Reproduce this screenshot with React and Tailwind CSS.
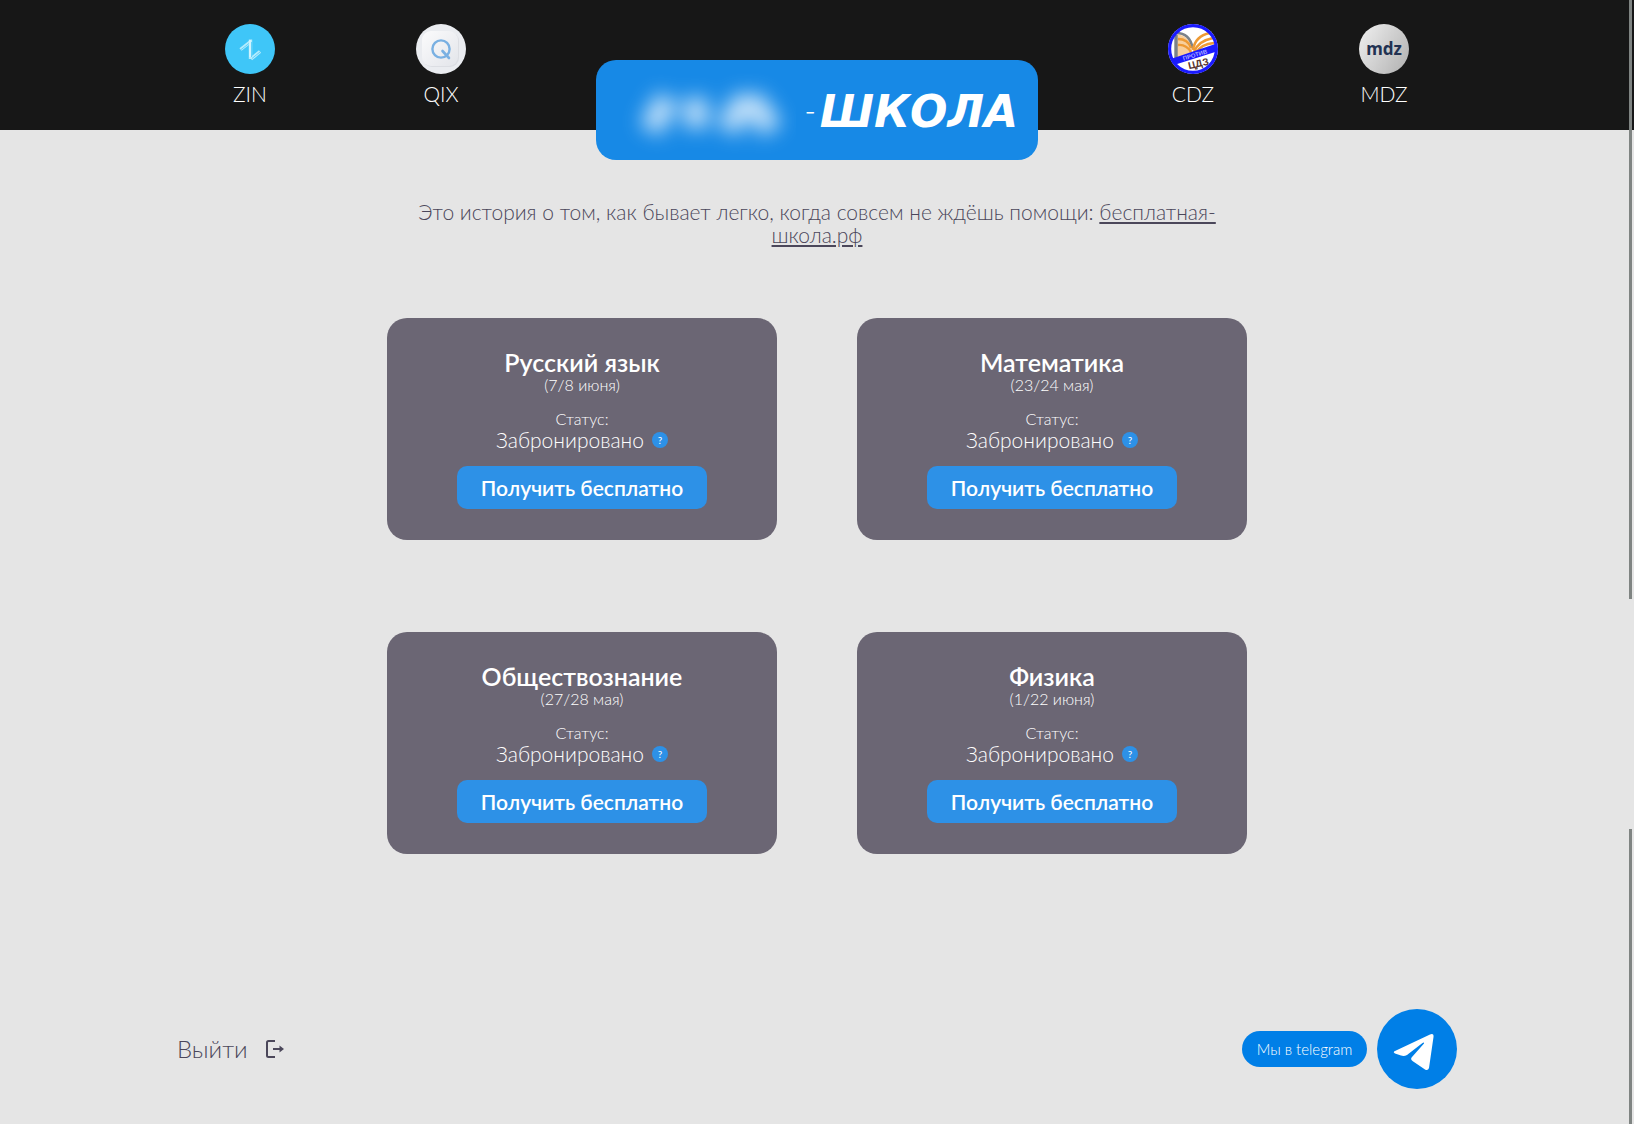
import React from 'react';

const subjects = [
  { id: 'rus', title: 'Русский язык', date: '(7/8 июня)' },
  { id: 'math', title: 'Математика', date: '(23/24 мая)' },
  { id: 'social', title: 'Обществознание', date: '(27/28 мая)' },
  { id: 'phys', title: 'Физика', date: '(1/22 июня)' },
];

const ZinIcon = () => (
  <svg viewBox="0 0 50 50" className="w-[50px] h-[50px]" aria-hidden="true">
    <circle cx="25" cy="25" r="25" fill="#3fc6f8" />
    <g fill="none" strokeLinejoin="miter">
      <path d="M15.500 25.500 L25 18" stroke="#b4ecfd" strokeWidth="3.400" />
      <path d="M25.500 15.500 V35" stroke="#b4ecfd" strokeWidth="3.400" />
      <path d="M26 35 L35 27.500" stroke="#b4ecfd" strokeWidth="3.400" />
      <path d="M15.500 26 L24 19.500 M26.500 18 V33 M27 34.500 L35 28" stroke="#3fc6f8" strokeWidth="0.700" />
      <path d="M25 16 V33" stroke="#e2f9ff" strokeWidth="1.200" />
    </g>
  </svg>
);

const QixIcon = () => (
  <svg viewBox="0 0 50 50" className="w-[50px] h-[50px]" aria-hidden="true">
    <defs>
      <linearGradient id="qixTile" x1="0" y1="0" x2="1" y2="1">
        <stop offset="0" stopColor="#fbfbfc" />
        <stop offset="1" stopColor="#e3e5ea" />
      </linearGradient>
    </defs>
    <circle cx="25" cy="25" r="25" fill="#eaecf0" />
    <rect x="7" y="8" width="36" height="35" rx="9" fill="#dcdee3" />
    <rect x="6" y="7" width="36" height="35" rx="9" fill="url(#qixTile)" />
    <circle cx="25" cy="25" r="8.6" fill="none" stroke="#79b0e2" strokeWidth="2.4" />
    <path d="M26.5 27 L33 34" stroke="#79b0e2" strokeWidth="2.6" strokeLinecap="round" />
  </svg>
);

const CdzIcon = () => (
  <svg viewBox="0 0 50 50" className="w-[50px] h-[50px]" aria-hidden="true">
    <defs>
      <clipPath id="cdzClip">
        <circle cx="25" cy="25" r="23" />
      </clipPath>
    </defs>
    <circle cx="25" cy="25" r="25" fill="#fff" />
    <g clipPath="url(#cdzClip)">
      <path d="M9 10 Q21 12 24 23 L24 30 L9 35 Z" fill="#f8cf9c" />
      <path d="M8 11 V36" stroke="#7b8289" strokeWidth="3.4" />
      <path d="M8 9 Q22 9 24.5 24" stroke="#7b8289" strokeWidth="2.6" fill="none" />
      <path d="M10 15 Q20 15 23 24 M10 21 Q18 20 23 28" stroke="#ee9a35" strokeWidth="2.4" fill="none" />
      <path d="M25 26 Q27 12 42 9 M26 28 Q30 17 45 14 M28 29 Q33 20 46 19" stroke="#ee9a35" strokeWidth="2.6" fill="none" />
      <path d="M0 36 L50 19 V27 L0 43 Z" fill="#1a1aff" />
      <text x="27" y="33" transform="rotate(-17 27 31)" textAnchor="middle" fontFamily="Liberation Sans, sans-serif" fontSize="6" fontWeight="700" fill="#a9a9ff">ПРОТИВ</text>
      <text x="30" y="43" transform="rotate(-13 30 38)" textAnchor="middle" fontFamily="Liberation Sans, sans-serif" fontSize="10" fontWeight="700" fill="#55332e">ЦДЗ</text>
    </g>
    <circle cx="25" cy="25" r="23.4" fill="none" stroke="#1a1aff" strokeWidth="3.2" />
  </svg>
);

const MdzIcon = () => (
  <svg viewBox="0 0 50 50" className="w-[50px] h-[50px]" aria-hidden="true">
    <defs>
      <linearGradient id="mdzBg" x1="0" y1="0" x2="1" y2="0.6">
        <stop offset="0" stopColor="#f1f1f1" />
        <stop offset="1" stopColor="#b9b9b9" />
      </linearGradient>
    </defs>
    <circle cx="25" cy="25" r="25" fill="url(#mdzBg)" />
    <text x="25" y="31" textAnchor="middle" fontFamily="Noto Sans, sans-serif" fontSize="17" fontWeight="700" fill="#223252">mdz</text>
  </svg>
);

const leftLinks = [
  { label: 'ZIN', icon: ZinIcon },
  { label: 'QIX', icon: QixIcon },
];

const rightLinks = [
  { label: 'CDZ', icon: CdzIcon },
  { label: 'MDZ', icon: MdzIcon },
];

const NavLinks = ({ links }) => (
  <nav className="flex gap-[141px] pt-6">
    {links.map((link) => {
      const Icon = link.icon;
      return (
        <a key={link.label} href="#" className="flex w-[50px] flex-col items-center gap-2 text-white">
          <Icon />
          <span className="text-[21px] leading-6 font-light">{link.label}</span>
        </a>
      );
    })}
  </nav>
);

const Logo = () => (
  <h1 className="mt-[60px] -mb-[30px] flex h-[100px] w-[442px] items-center justify-between rounded-[20px] bg-[#1789e6] pr-5">
    <svg viewBox="0 0 200 100" className="h-[100px] w-[200px]" aria-hidden="true">
      <defs>
        <filter id="soft" filterUnits="userSpaceOnUse" x="0" y="0" width="230" height="100">
          <feGaussianBlur stdDeviation="10" />
        </filter>
      </defs>
      <g filter="url(#soft)" fill="none" stroke="#fff" strokeWidth="23" opacity="0.75">
        <path d="M54 70 L72 38" />
        <path d="M100 68 V38" />
        <path d="M131 70 L145 46 H160 L176 70" />
      </g>
    </svg>
    <span className="flex items-center gap-1 pt-1 text-white">
      <span className="font-[Inter,sans-serif] text-2xl leading-none font-light">-</span>
      <span className="font-['DejaVu_Sans',sans-serif] text-[44px] leading-none font-bold italic">ШКОЛА</span>
    </span>
  </h1>
);

const SubjectCard = ({ subject }) => (
  <article className="flex flex-col items-center rounded-[20px] bg-[#6b6674] pt-[30px] pb-[31px] text-white">
    <h2 className="text-[25px] leading-7 font-semibold">{subject.title}</h2>
    <p className="text-base leading-[18px] font-light">{subject.date}</p>
    <p className="mt-4 text-base leading-[18px] font-light">Статус:</p>
    <div className="flex items-center gap-2">
      <span className="text-[21px] leading-6 font-light">Забронировано</span>
      <button
        aria-label="Что это значит?"
        className="flex size-4 items-center justify-center rounded-full bg-[#2d91e7] text-[10px]"
      >
        ?
      </button>
    </div>
    <button className="mt-[14px] h-[43px] w-[250px] rounded-[10px] bg-[#2d91e7] text-[21px] font-semibold">
      Получить бесплатно
    </button>
  </article>
);

const Footer = () => (
  <footer className="mx-auto mt-[155px] flex w-full max-w-[1280px] items-center justify-between pb-[35px]">
    <button className="flex items-center gap-[18px] text-2xl font-light text-[#4b475a]">
      Выйти
      <svg viewBox="0 0 18 18" className="size-[18px]" fill="none" stroke="currentColor" strokeWidth="2" aria-hidden="true">
        <path d="M9 1 H2.5 Q1 1 1 2.5 V15.5 Q1 17 2.5 17 H9" />
        <path d="M7 9 H15" />
        <path d="M13.5 5.5 L18 9 L13.5 12.5 Z" fill="currentColor" stroke="none" />
      </svg>
    </button>
    <a href="#" className="flex items-center gap-[10px] text-white">
      <span className="flex h-9 w-[125px] items-center justify-center rounded-full bg-[#007fe7] text-[15px] font-light">
        Мы в telegram
      </span>
      <span className="flex size-20 items-center justify-center rounded-full bg-[#007fe7]">
        <svg viewBox="0 0 80 80" className="size-20" aria-hidden="true">
          <path
            d="M18 42 L53 25.5 Q57 24 56.5 28 L52 59 Q51 62 48 60.5 L35.5 52 Q33 50 35 48 L47 34.5 Q47.500 33 45.500 34 L30 46 Q27 47.500 24 46.500 L18 44.500 Q15.500 43.200 18 42 Z"
            fill="#fff"
          />
        </svg>
      </span>
    </a>
  </footer>
);

const App = () => {
  return (
    <div className="relative min-h-screen bg-[#e5e5e5] font-[Lato,'Open_Sans',sans-serif]">
      <header className="bg-[#171717]">
        <div className="mx-auto flex max-w-[1280px] items-start justify-between px-12">
          <NavLinks links={leftLinks} />
          <Logo />
          <NavLinks links={rightLinks} />
        </div>
      </header>

      <main>
        <p className="mx-auto mt-[70px] max-w-[800px] text-center text-[21px] leading-[23px] font-light text-[#4b475a]">
          Это история о том, как бывает легко, когда совсем не ждёшь помощи:{' '}
          <a href="#" className="underline underline-offset-2">бесплатная-школа.рф</a>
        </p>
        <section className="mx-auto mt-[72px] grid max-w-[860px] grid-cols-2 gap-x-20 gap-y-[92px]">
          {subjects.map((subject) => (
            <SubjectCard key={subject.id} subject={subject} />
          ))}
        </section>
      </main>

      <Footer />

      {/* Scrollbar thumbs */}
      <div className="absolute inset-y-0 right-[2px] flex w-[3px] flex-col justify-between">
        <div className="h-[599px] bg-[#7f8482]" />
        <div className="h-[295px] bg-[#7f8482]" />
      </div>
    </div>
  );
};

export default App;
